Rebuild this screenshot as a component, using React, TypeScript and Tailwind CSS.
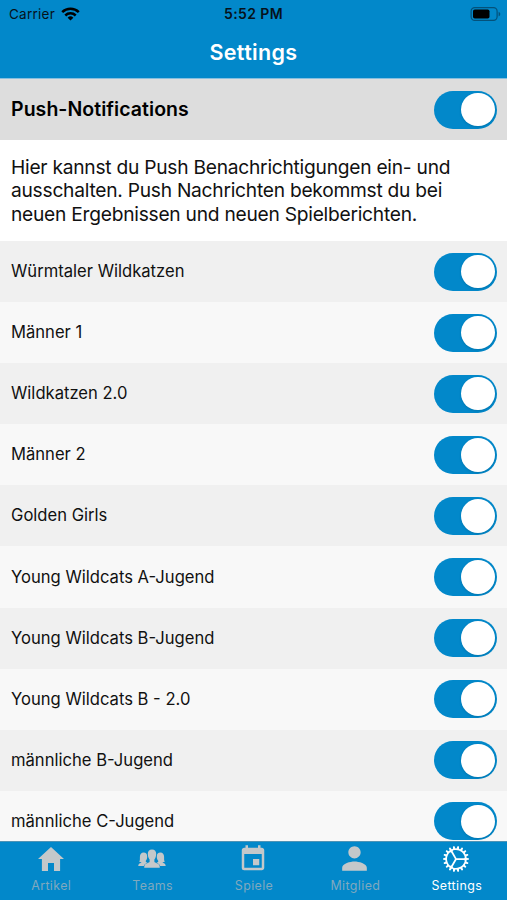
import React, { useState } from 'react';
import { IoIosCog, IoMdHome } from 'react-icons/io';
import { MdEvent, MdPerson } from 'react-icons/md';

interface ToggleProps {
  label: string;
  checked: boolean;
  onChange: (value: boolean) => void;
}

interface Tab {
  name: string;
  icon: React.ReactNode;
}

const TEAMS = [
  'Würmtaler Wildkatzen',
  'Männer 1',
  'Wildkatzen 2.0',
  'Männer 2',
  'Golden Girls',
  'Young Wildcats A-Jugend',
  'Young Wildcats B-Jugend',
  'Young Wildcats B - 2.0',
  'männliche B-Jugend',
  'männliche C-Jugend',
];

const TeamsIcon = () => (
  <svg width="28" height="20" viewBox="0 0 28 20" fill="currentColor">
    <path d="M14 0.5c2.800 0 4.300 1.800 4.200 4.500-.1 2.700-.8 4.300-1.800 5.400v2.300c.4 1.200 4.200 1.400 5 3.500.3.800.4 1.700.4 2.600H6.200c0-.9.1-1.800.4-2.600.8-2.100 4.600-2.300 5-3.500v-2.300c-1-1.100-1.700-2.700-1.800-5.400-.1-2.700 1.400-4.500 4.200-4.500z" />
    <path d="M5.600 3.600c2.400 0 3.600 1.600 3.600 3.900 0 2.100-.5 3.300-1.400 4.200v1.100c.2.500.9.700 1.700 1-1.700.8-3 1.500-3.700 3.200H.3c0-2.500 2-2.700 3.300-3.500-1-.1-1.900-.4-2.500-.9 1.100-.9.7-2.900.8-4.900.1-2.400 1.300-4.100 3.700-4.100z" />
    <path d="M22.400 3.600c-2.400 0-3.600 1.600-3.600 3.900 0 2.100.5 3.300 1.400 4.200v1.100c-.2.500-.9.700-1.700 1 1.700.8 3 1.500 3.700 3.200h5.500c0-2.500-2-2.700-3.300-3.500 1-.1 1.900-.4 2.500-.9-1.100-.9-.7-2.900-.8-4.900-.1-2.400-1.300-4.100-3.700-4.100z" />
  </svg>
);

const TABS: Tab[] = [
  { name: 'Artikel', icon: <IoMdHome size={32} className="ml-px" /> },
  { name: 'Teams', icon: <TeamsIcon /> },
  { name: 'Spiele', icon: <MdEvent size={30} className="mt-px" /> },
  { name: 'Mitglied', icon: <MdPerson size={37} /> },
  { name: 'Settings', icon: <IoIosCog size={32} /> },
];

const Toggle: React.FC<ToggleProps> = ({ label, checked, onChange }) => (
  <button
    role="switch"
    aria-checked={checked}
    aria-label={label}
    onClick={() => onChange(!checked)}
    className={`flex h-[38px] w-[63px] shrink-0 items-center rounded-full px-[2.5px] transition-colors ${
      checked ? 'justify-end bg-[#0288ca]' : 'justify-start bg-gray-300'
    }`}
  >
    <span className="size-[33.5px] rounded-full bg-white shadow-sm" />
  </button>
);

const StatusBar = () => (
  <div className="grid h-[26px] grid-cols-3 items-center pt-[2px] pr-[7px] pl-[9px] text-[#06121b]">
    <div className="flex items-center gap-[6px]">
      <span className="text-[13.5px] tracking-[0.25px]">Carrier</span>
      <svg width="19" height="14" viewBox="0 0 19 14" fill="none" stroke="black" strokeWidth="2.5">
        <path d="M1.2 5.2a11.8 11.8 0 0 1 16.6 0" />
        <path d="M4.3 8.5a7.4 7.4 0 0 1 10.4 0" />
        <path d="M9.5 13.6 6.6 10.7a4.1 4.1 0 0 1 5.8 0z" fill="black" stroke="none" />
      </svg>
    </div>
    <span className="-mt-px -ml-[2px] text-center text-[14px] font-semibold tracking-[0.4px] whitespace-nowrap">
      5:52 PM
    </span>
    <svg className="-mr-px justify-self-end" width="31" height="14" viewBox="0 0 31 14">
      <rect x="1.1" y="0.6" width="26" height="12.8" rx="3.6" fill="none" stroke="#04517a" strokeWidth="1.2" />
      <rect x="3" y="2.5" width="16.5" height="9" rx="1.8" fill="black" />
      <path d="M28.6 4.7c2.2.8 2.2 3.8 0 4.6z" fill="#04517a" />
    </svg>
  </div>
);

export default function App() {
  const [pushEnabled, setPushEnabled] = useState(true);
  const [disabledTeams, setDisabledTeams] = useState<string[]>([]);
  const [activeTab, setActiveTab] = useState('Settings');

  const setTeam = (team: string, enabled: boolean) => {
    setDisabledTeams(prev => (enabled ? prev.filter(t => t !== team) : [...prev, team]));
  };

  return (
    <div className="flex h-[900px] w-[507px] flex-col overflow-hidden bg-white font-['Inter','Liberation_Sans',sans-serif] text-[#111]">
      <header className="h-[79px] shrink-0 border-b border-[#86bfdf] bg-[#0288ca]">
        <StatusBar />
        <h1 className="flex h-[52px] items-center justify-center text-[21.5px] font-semibold tracking-[0.35px] text-white">
          Settings
        </h1>
      </header>

      <main className="min-h-0 flex-1 overflow-hidden">
        <div className="flex h-[61px] items-center justify-between bg-[#dddddd] pr-[10px] pl-[11px]">
          <h2 className="text-[19.5px] font-semibold tracking-[0.05px] text-black">Push-Notifications</h2>
          <Toggle label="Push-Notifications" checked={pushEnabled} onChange={setPushEnabled} />
        </div>

        <p className="h-[101px] pt-[16px] pl-[11px] text-[19.2px] leading-[23.4px] tracking-[-0.25px]">
          Hier kannst du Push Benachrichtigungen ein- und
          <br />
          ausschalten. Push Nachrichten bekommst du bei
          <br />
          neuen Ergebnissen und neuen Spielberichten.
        </p>

        <ul>
          {TEAMS.map(team => (
            <li
              key={team}
              className="flex h-[61.1px] items-center justify-between pr-[10px] pl-[11px] text-[16.6px] odd:bg-[#f0f0f0] even:bg-[#f8f8f8]"
            >
              <span>{team}</span>
              <Toggle
                label={team}
                checked={!disabledTeams.includes(team)}
                onChange={value => setTeam(team, value)}
              />
            </li>
          ))}
        </ul>
      </main>

      <nav className="grid h-[59px] shrink-0 grid-cols-5 border-t border-[#4e93b5] bg-[#0288ca]">
        {TABS.map(tab => (
          <button
            key={tab.name}
            onClick={() => setActiveTab(tab.name)}
            className={`flex flex-col items-center ${
              tab.name === activeTab ? 'text-white' : 'text-[#c4c8ca]'
            }`}
          >
            <span className="flex h-[33px] items-center justify-center">{tab.icon}</span>
            <span
              className={`pl-px text-[12.4px] leading-[22px] tracking-[0.4px] ${
                tab.name === activeTab ? '' : 'text-[#80a9be]'
              }`}
            >
              {tab.name}
            </span>
          </button>
        ))}
      </nav>
    </div>
  );
}
